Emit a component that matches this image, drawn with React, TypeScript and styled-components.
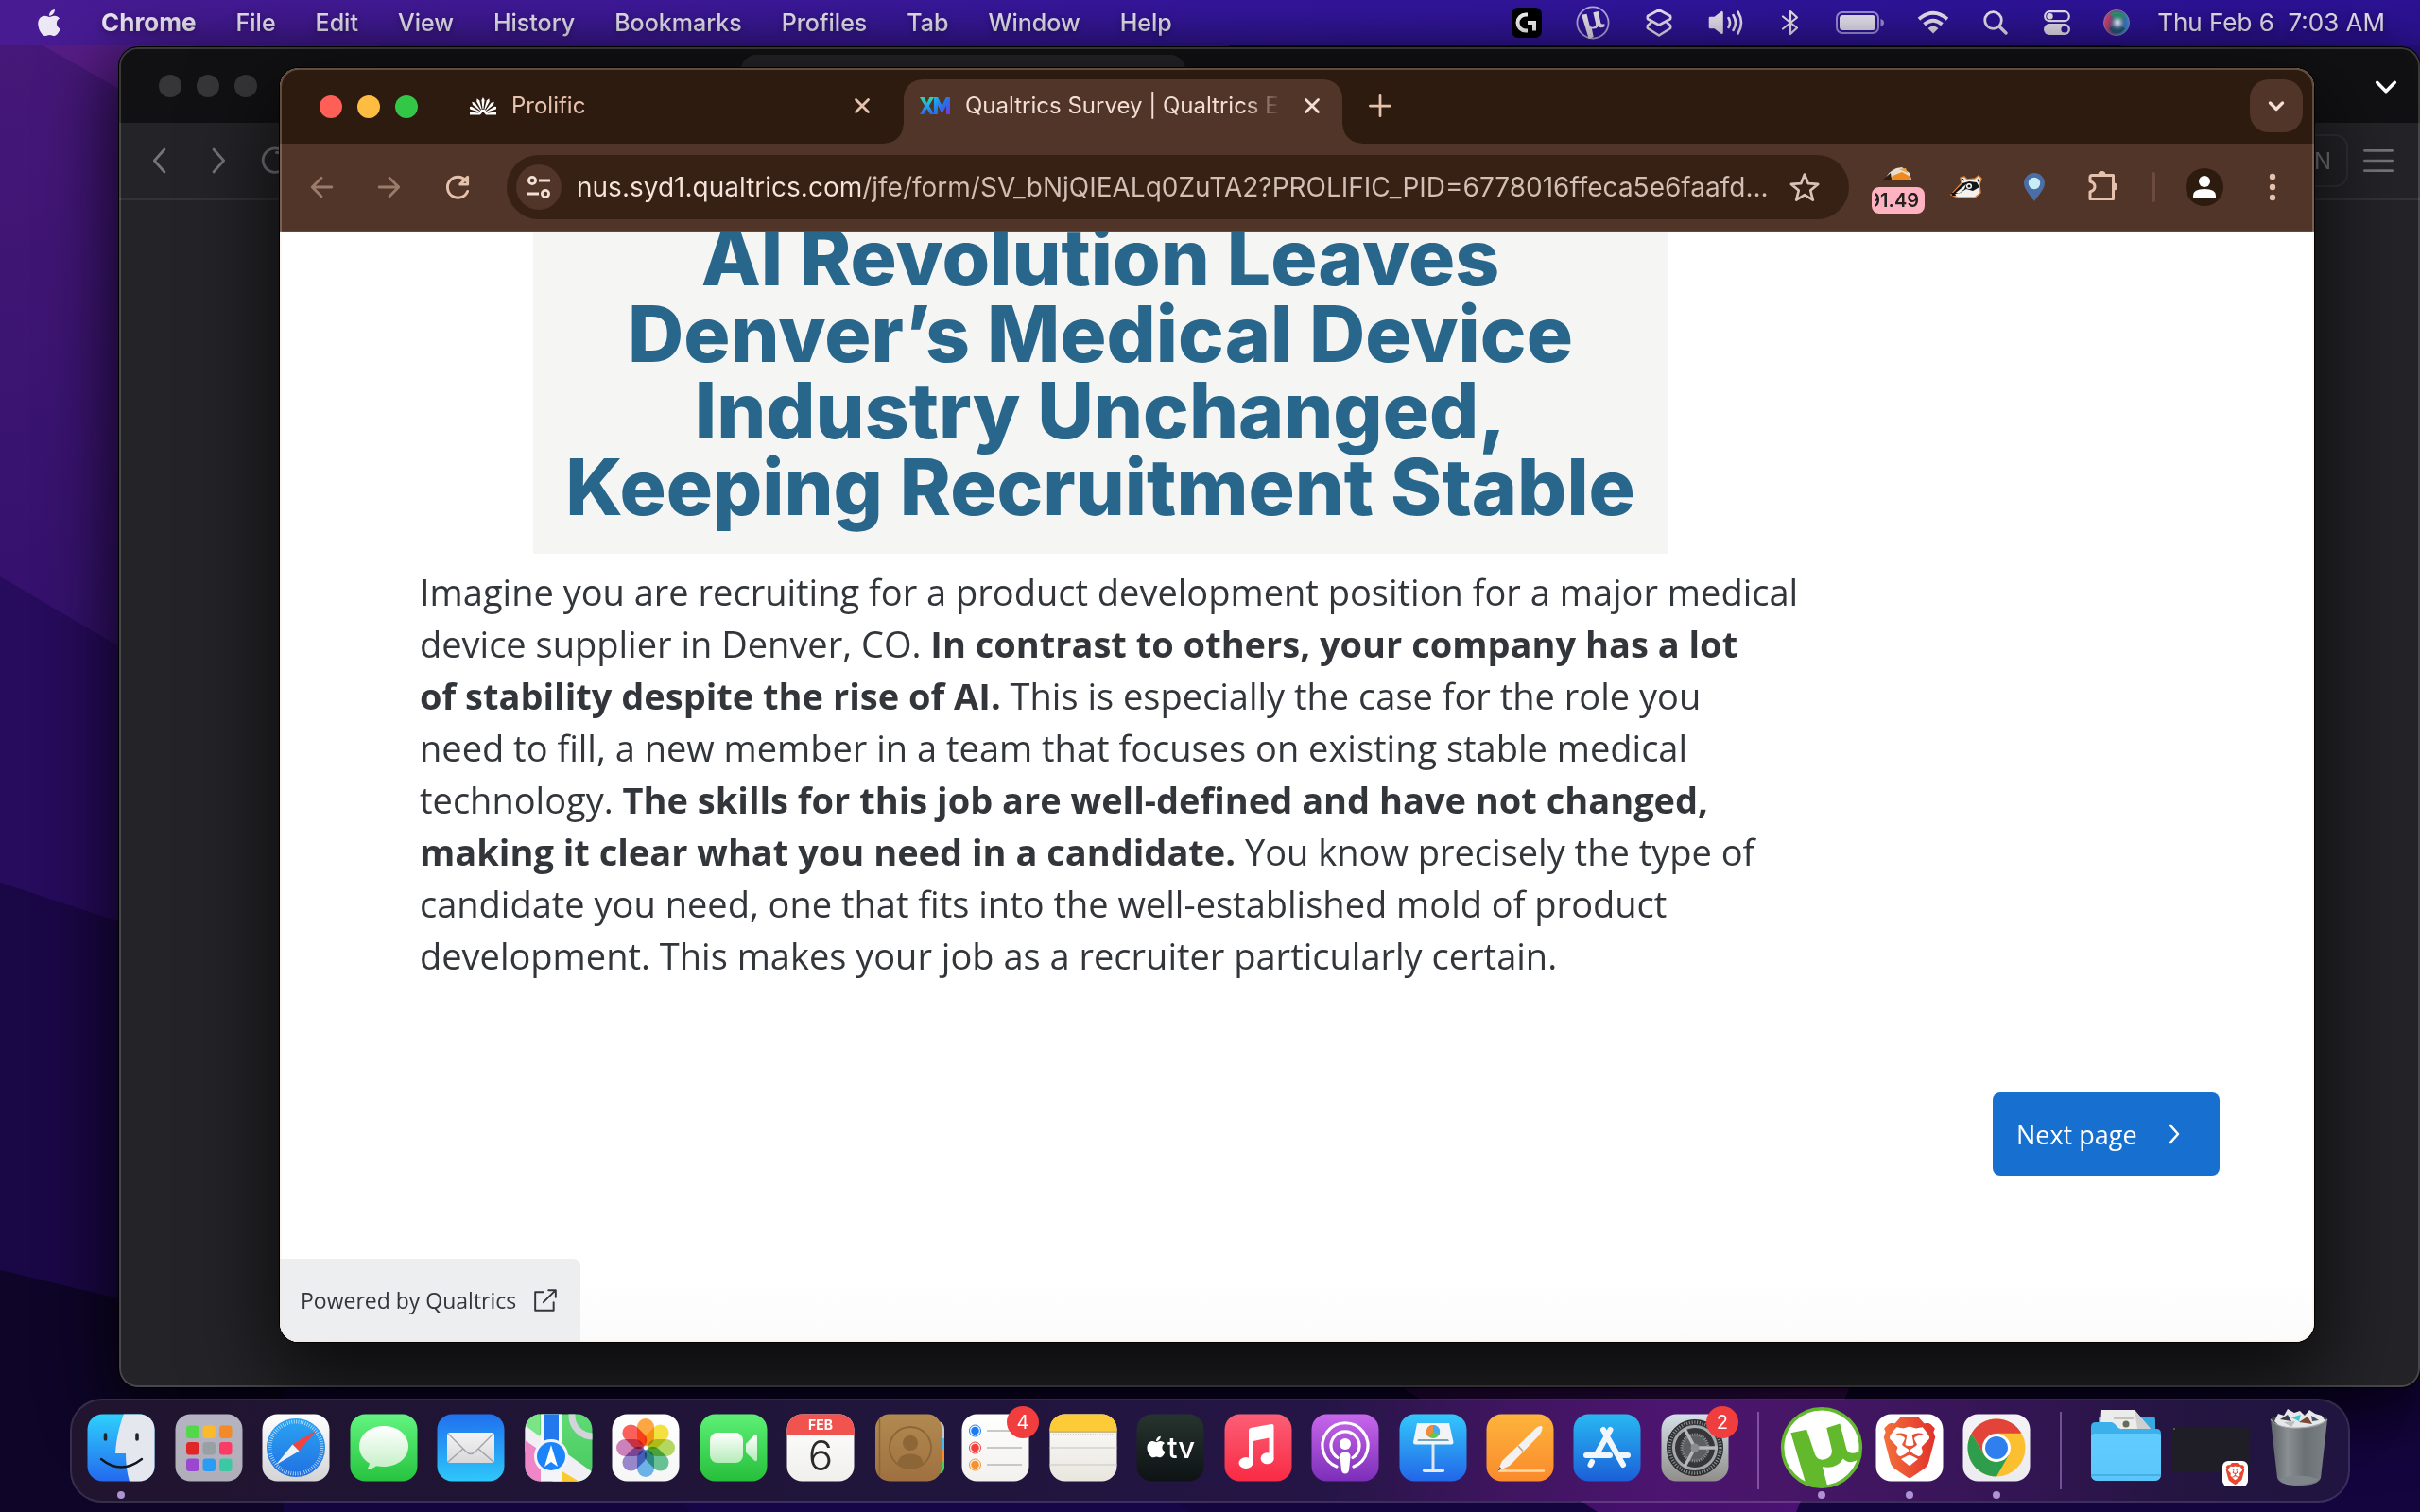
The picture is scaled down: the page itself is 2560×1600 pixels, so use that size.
import React from 'react';
import styled, { createGlobalStyle, css } from 'styled-components';
import { FaApple } from 'react-icons/fa';
import { SiBrave } from 'react-icons/si';

const UI = `Inter, "Liberation Sans", sans-serif`;
const READ = `"Open Sans", "Liberation Sans", sans-serif`;

const GlobalStyle = createGlobalStyle`
  * { box-sizing: border-box; }
  html, body, #root { height: 100%; }
  body { margin: 0; overflow: hidden; background: #0d0526; font-family: ${UI}; }
  button { margin: 0; padding: 0; border: 0; background: none; color: inherit; font: inherit; }
  svg { display: block; flex: none; }
`;

const Desktop = styled.div`
  position: relative;
  height: 100vh;
  min-height: 900px;
  overflow: hidden;
`;

const Wallpaper = styled.svg`
  position: absolute;
  inset: 0;
  width: 100%;
  height: 100%;
`;

/* ---------- menu bar ---------- */

const MenuBar = styled.header`
  position: relative;
  display: flex;
  align-items: center;
  justify-content: space-between;
  height: 48px;
  padding: 0 37px 0 39px;
  color: #ece8f6;
  background: linear-gradient(90deg, #481b92 0%, #3f1a9a 25%, #35179e 50%, #2f159c 75%, #2d1296 100%);
  font-size: 25px;
  line-height: 32px;
  text-shadow: 0 2px 6px rgba(0, 0, 0, 0.35);
`;

const MenuList = styled.nav`
  display: flex;
  align-items: center;
  gap: 42px;
`;

const MenuItem = styled.button<{ $bold?: boolean }>`
  font-size: ${(p) => (p.$bold ? 26 : 25)}px;
  font-weight: ${(p) => (p.$bold ? 700 : 500)};
  text-shadow: inherit;
  svg {
    width: 26px;
    height: 32px;
  }
`;

const StatusList = styled.div`
  display: flex;
  align-items: center;
`;

const StatusIcon = styled.button<{ $w: number }>`
  display: flex;
  justify-content: center;
  width: ${(p) => p.$w}px;
`;

const Clock = styled.time`
  margin-left: 12px;
  font-size: 26px;
  white-space: pre;
`;

/* ---------- windows ---------- */

const WindowFrame = styled.section<{ $ring: string }>`
  position: absolute;
  display: flex;
  flex-direction: column;
  overflow: hidden;
  border-radius: 20px;
  &::after {
    content: '';
    position: absolute;
    inset: 0;
    border-radius: inherit;
    box-shadow: inset 0 0 0 2px ${(p) => p.$ring};
    pointer-events: none;
  }
`;

const BackWindow = styled(WindowFrame)`
  inset: 50px 0 132px 126px;
  background: #242428;
  box-shadow: 0 0 0 1px #000, 0 20px 70px 10px rgba(0, 0, 0, 0.75);
`;

const BackTitle = styled.div`
  display: flex;
  align-items: flex-start;
  justify-content: space-between;
  height: 80px;
  padding: 0 22px 0 42px;
  background: #111113;
  color: #fff;
`;

const BackTab = styled.div`
  position: absolute;
  top: 8px;
  left: 658px;
  width: 470px;
  height: 60px;
  border-radius: 16px;
  background: #232327;
`;

const BackTabSearch = styled.button`
  padding-top: 28px;
`;

const BackToolbar = styled.div`
  display: flex;
  align-items: center;
  justify-content: space-between;
  height: 82px;
  padding: 0 28px 0 28px;
  border-bottom: 2px solid #323238;
  color: #75757a;
`;

const Row = styled.div<{ $gap: number }>`
  display: flex;
  align-items: center;
  gap: ${(p) => p.$gap}px;
`;

const VpnButton = styled.button`
  width: 120px;
  height: 56px;
  padding-right: 16px;
  border: 2px solid #313136;
  border-radius: 14px;
  text-align: right;
  font-size: 24px;
`;

const Light = styled.button<{ $color: string }>`
  width: 24px;
  height: 24px;
  border-radius: 50%;
  background: ${(p) => p.$color};
`;

const Lights = styled.div<{ $top: number }>`
  display: flex;
  gap: 16px;
  padding-top: ${(p) => p.$top}px;
`;

const ChromeWindow = styled(WindowFrame)`
  inset: 72px 112px 180px 296px;
  background: #fff;
  box-shadow: 0 0 0 1px #000, 0 36px 90px 8px rgba(0, 0, 0, 0.7);
`;

const TabStrip = styled.div`
  display: flex;
  align-items: flex-end;
  height: 80px;
  padding: 0 12px 0 42px;
  background: #2e1b0f;
  color: #e6c2ae;
`;

const StripLights = styled(Lights)`
  align-self: flex-start;
  margin-right: 38px;
`;

const Tab = styled.div<{ $active?: boolean }>`
  position: relative;
  display: flex;
  align-items: center;
  width: 464px;
  height: 68px;
  margin-right: 12px;
  padding: 0 20px 12px 17px;
  border-radius: 20px 20px 0 0;
  ${(p) =>
    p.$active &&
    css`
      background: #503528;
      color: #f3dfd6;
      &::before,
      &::after {
        content: '';
        position: absolute;
        bottom: 0;
        width: 20px;
        height: 20px;
      }
      &::before {
        left: -20px;
        background: radial-gradient(circle at 0 0, transparent 19px, #503528 20px);
      }
      &::after {
        right: -20px;
        background: radial-gradient(circle at 100% 0, transparent 19px, #503528 20px);
      }
    `}
`;

const TabTitle = styled.span`
  flex: 1;
  min-width: 0;
  margin: 0 20px 0 16px;
  overflow: hidden;
  white-space: nowrap;
  font-size: 24px;
  line-height: 32px;
  mask-image: linear-gradient(90deg, #000 calc(100% - 40px), transparent);
`;

const NewTab = styled.button`
  width: 56px;
  height: 56px;
  padding: 13px;
  margin-bottom: 12px;
`;

const TabSearch = styled.button`
  display: grid;
  place-items: center;
  width: 56px;
  height: 56px;
  margin: 0 0 12px auto;
  border-radius: 20px;
  background: #503528;
  color: #f3dfd6;
`;

const Toolbar = styled.div`
  display: flex;
  align-items: center;
  gap: 16px;
  height: 94px;
  padding: 0 16px;
  border-bottom: 2px solid #5f4a40;
  background: #503528;
  color: #e6c2ae;
`;

const ToolButton = styled.button<{ $dim?: boolean }>`
  position: relative;
  display: grid;
  place-items: center;
  flex: none;
  width: 56px;
  height: 56px;
  opacity: ${(p) => (p.$dim ? 0.5 : 1)};
`;

const Omnibox = styled.label`
  display: flex;
  align-items: center;
  flex: 1;
  height: 68px;
  margin: 0 8px;
  padding: 0 30px 0 10px;
  border-radius: 34px;
  background: #372115;
  color: #d8c3ba;
`;

const SiteInfo = styled.button`
  display: grid;
  place-items: center;
  flex: none;
  width: 48px;
  height: 48px;
  border-radius: 50%;
  background: #503528;
  color: #f3dfd6;
`;

const Address = styled.input`
  flex: 1;
  min-width: 0;
  height: 48px;
  margin: 0 20px 0 16px;
  padding: 0;
  border: 0;
  outline: 0;
  font-family: ${UI};
  font-size: 28px;
  color: transparent;
  background: linear-gradient(90deg, #f6e4dc 303px, #d3bfb6 303px);
  background-clip: text;
  -webkit-background-clip: text;
`;

const PriceBadge = styled.span`
  position: absolute;
  left: 0;
  bottom: 0;
  display: flex;
  justify-content: flex-end;
  width: 56px;
  height: 28px;
  padding: 0 6px 0 4px;
  border-radius: 8px;
  background: #ffb3c0;
  color: #24201f;
  font-size: 20px;
  font-weight: 600;
  line-height: 28px;
`;

const Clip = styled.span`
  display: flex;
  justify-content: flex-end;
  width: 46px;
  overflow: hidden;
`;

const Divider = styled.span`
  width: 4px;
  height: 32px;
  margin: 0 8px;
  border-radius: 2px;
  background: #6c4b3e;
`;

const Avatar = styled.span`
  display: grid;
  place-items: center;
  width: 40px;
  height: 40px;
  border-radius: 50%;
  background: #2e1b0f;
`;

/* ---------- survey ---------- */

const Survey = styled.main`
  display: flex;
  flex-direction: column;
  flex: 1;
  min-height: 0;
  overflow: hidden;
  color: #32363b;
  background: linear-gradient(180deg, #fff 94%, #fbfbfc);
`;

const Question = styled.article`
  width: 1440px;
  max-width: 90%;
  margin-left: 148px;
`;

const Banner = styled.h1`
  max-width: 1200px;
  margin: -14px auto 0;
  padding-bottom: 30px;
  background: #f5f5f3;
  color: #28668b;
  font-family: ${UI};
  font-size: 82px;
  font-weight: 800;
  line-height: 81px;
  text-align: center;
  white-space: nowrap;
`;

const Passage = styled.p`
  margin: 13px 0 0;
  font-family: ${READ};
  font-size: 38px;
  line-height: 55px;
  white-space: nowrap;
`;

const NextButton = styled.button`
  display: flex;
  align-items: center;
  justify-content: space-between;
  align-self: flex-end;
  width: 240px;
  height: 88px;
  margin: 117px 100px 0 0;
  padding: 0 36px 0 25px;
  border-radius: 8px;
  background: #1770cf;
  color: #fff;
  font-family: ${READ};
  font-size: 27px;
`;

const Powered = styled.a`
  display: flex;
  align-items: center;
  gap: 18px;
  align-self: flex-start;
  height: 88px;
  margin-top: auto;
  padding: 0 24px 0 22px;
  border-radius: 0 8px 0 0;
  background: #eceef0;
  color: #32363b;
  font-family: ${READ};
  font-size: 23px;
  text-decoration: none;
`;

/* ---------- dock ---------- */

const Dock = styled.footer`
  position: absolute;
  left: 74px;
  right: 74px;
  bottom: 10px;
  display: flex;
  height: 110px;
  padding: 14px 6px 0;
  border: 2px solid rgba(255, 255, 255, 0.17);
  border-radius: 34px;
  background: linear-gradient(90deg, #20142f 0%, #20153c 38%, #251546 55%, #3f1560 63%, #4c1570 70%, #461666 76%, #321552 86%, #231540 93%, #201440 100%);
  background-clip: padding-box;
`;

const DockItem = styled.button`
  position: relative;
  display: flex;
  flex-direction: column;
  align-items: center;
  flex: 1;
  height: 94px;
`;

const IconBox = styled.span`
  position: relative;
  display: grid;
  place-items: center;
  width: 72px;
  height: 72px;
`;

const Running = styled.span`
  width: 8px;
  height: 8px;
  margin-top: 10px;
  border-radius: 50%;
  background: #ad92d4;
`;

const Count = styled.span`
  position: absolute;
  top: -8px;
  right: -10px;
  width: 34px;
  height: 34px;
  border-radius: 50%;
  background: #f03d3d;
  color: #fff;
  font-size: 20px;
  line-height: 34px;
`;

const DockSplit = styled.span`
  width: 2px;
  height: 82px;
  margin: -2px 20px 0;
  background: rgba(214, 170, 255, 0.4);
`;

/* ---------- small glyphs ---------- */

const Stroke = ({ d, size, w = 2, vb = 24 }: { d: string; size: number; w?: number; vb?: number }) => (
  <svg width={size} height={size} viewBox={`0 0 ${vb} ${vb}`} fill="none" stroke="currentColor" strokeWidth={w} strokeLinecap="round" strokeLinejoin="round">
    <path d={d} />
  </svg>
);

const Close = () => (
  <button aria-label="Close tab">
    <Stroke d="M5.500 5.500L18.500 18.500M18.500 5.500L5.500 18.500" size={24} w={2.8} />
  </button>
);

const ProlificMark = () => (
  <svg width="28" height="20" viewBox="0 0 28 20" fill="#fff">
    {[-66, -44, -22, 0, 22, 44, 66].map((a) => (
      <path key={a} transform={`rotate(${a} 14 18)`} d="M13.600 13.500L12.400 4L14 1L15.600 4L14.400 13.500Z" />
    ))}
    <path d="M0 16.500L9 17.500L12 14H16L19 17.500L28 16.500V19.500H17L14 16L11 19.500H0z" />
  </svg>
);

const XmMark = () => (
  <svg width="32" height="20" viewBox="0 0 32 20">
    <defs>
      <linearGradient id="xm1" x1="0" y1="0" x2="0" y2="1">
        <stop offset="0" stopColor="#2fdca0" /><stop offset=".5" stopColor="#1fa8f0" /><stop offset="1" stopColor="#2b62e8" />
      </linearGradient>
      <linearGradient id="xm2" x1="0" y1="0" x2="1" y2="1">
        <stop offset="0" stopColor="#27b6e8" /><stop offset=".5" stopColor="#2371ee" /><stop offset="1" stopColor="#7a35e0" />
      </linearGradient>
    </defs>
    <path d="M0 1h4.500L7.500 7 10.500 1H15L9.800 10 15.400 19H10.800L7.500 13 4.400 19H0L5.200 10z" fill="url(#xm1)" />
    <path d="M15 1h4.200L23.500 10 27.800 1H32V19h-4V9.500L24.800 16h-2.600L19 9.500V19h-4z" fill="url(#xm2)" />
  </svg>
);

const MuPath = 'M17 27L32 24L40 56Q44 66 54 62Q60 59 58 50L51 20L66 17L73 50Q75 57 84 53L85 61Q74 68 66 61Q60 70 47 68L52 92L38 98Z';

const statusIcons: { name: string; w: number; icon: React.ReactNode }[] = [
  {
    name: 'Logitech G HUB', w: 66,
    icon: (
      <svg width="32" height="32" viewBox="0 0 32 32">
        <rect width="32" height="32" rx="7" fill="#000" />
        <path d="M17 7.500H15A8.500 8.500 0 0 0 15 24.500H17" fill="none" stroke="#fff" strokeWidth="4" />
        <path d="M17 14H26V24.500h-4V18H17z" fill="#fff" />
      </svg>
    ),
  },
  {
    name: 'uTorrent', w: 74,
    icon: (
      <svg width="36" height="36" viewBox="0 0 100 100">
        <circle cx="50" cy="50" r="46" fill="none" stroke="#b9b0e4" strokeWidth="5" />
        <path d={MuPath} fill="#ece8f6" />
      </svg>
    ),
  },
  {
    name: 'Shortcuts', w: 66,
    icon: (
      <svg width="30" height="32" viewBox="0 0 30 32" fill="none" stroke="#ece8f6" strokeWidth="2.600" strokeLinejoin="round">
        <path d="M15 2.500L27 9Q27.600 10.500 27 12L15 18.500L3 12Q2.400 10.500 3 9Z" />
        <path d="M7 15.500L3 19Q2.400 20.500 3 22L15 29.500L27 22Q27.600 20.500 27 19L23 15.500" />
      </svg>
    ),
  },
  {
    name: 'Volume', w: 76,
    icon: (
      <svg width="38" height="28" viewBox="0 0 38 28" fill="none" stroke="#ece8f6" strokeWidth="2.600" strokeLinecap="round">
        <path d="M2 9h5L14.500 3.200V24.800L7 19H2z" fill="#ece8f6" strokeLinejoin="round" />
        <path d="M21.500 9Q24.500 14 21.500 19M26.500 6Q31.500 14 26.500 22M31.500 2.500Q38.500 14 31.500 25.500" />
      </svg>
    ),
  },
  { name: 'Bluetooth', w: 60, icon: <svg width="20" height="28" viewBox="0 0 20 28" fill="none" stroke="#ece8f6" strokeWidth="2.200" strokeLinejoin="round" strokeLinecap="round"><path d="M2 7.500L17 19.500L10 26V2L17 8.500L2 20.500" /></svg> },
  {
    name: 'Battery', w: 88,
    icon: (
      <svg width="52" height="24" viewBox="0 0 52 24">
        <rect x="1" y="1" width="44" height="22" rx="6" fill="none" stroke="#9d92dc" strokeWidth="2" />
        <rect x="4" y="4" width="38" height="16" rx="3.500" fill="#ece8f6" />
        <path d="M47.500 8Q51 9 51 12T47.500 16z" fill="#9d92dc" />
      </svg>
    ),
  },
  {
    name: 'Wi-Fi', w: 66,
    icon: (
      <svg width="34" height="26" viewBox="0 0 34 26" fill="none" stroke="#ece8f6" strokeWidth="3.800">
        <path d="M2 9.200Q17-3.800 32 9.200M7.500 14.800Q17 6.500 26.500 14.800" />
        <path d="M11.500 19Q17 14.500 22.500 19L17 24.500z" fill="#ece8f6" stroke="none" />
      </svg>
    ),
  },
  { name: 'Search', w: 66, icon: <svg width="26" height="26" viewBox="0 0 26 26" fill="none" stroke="#ece8f6" strokeWidth="2.800" strokeLinecap="round"><circle cx="10.500" cy="10.500" r="8.800" /><path d="M17 17L24 24" strokeWidth="3.400" /></svg> },
  {
    name: 'Control Center', w: 64,
    icon: (
      <svg width="28" height="26" viewBox="0 0 28 26">
        <rect x="1.200" y="1.200" width="25.600" height="10" rx="5" fill="none" stroke="#ece8f6" strokeWidth="2.200" />
        <circle cx="6.500" cy="6.200" r="3.200" fill="#ece8f6" />
        <rect y="14" width="28" height="12" rx="6" fill="#ece8f6" />
        <circle cx="22" cy="20" r="3.600" fill="#2f159c" />
      </svg>
    ),
  },
  {
    name: 'Siri', w: 62,
    icon: (
      <svg width="28" height="28" viewBox="0 0 28 28">
        <defs>
          <radialGradient id="siri" cx=".55" cy=".5" r=".45"><stop offset="0" stopColor="#fff" /><stop offset=".3" stopColor="#c8e4f6" stopOpacity=".8" /><stop offset="1" stopColor="#2a3a70" stopOpacity="0" /></radialGradient>
          <linearGradient id="siri2" x1="0" y1=".4" x2="1" y2=".6"><stop offset="0" stopColor="#f04470" /><stop offset=".45" stopColor="#6a4a8a" /><stop offset="1" stopColor="#2a96e8" /></linearGradient>
        </defs>
        <circle cx="14" cy="14" r="13.500" fill="url(#siri2)" stroke="#8a86b0" />
        <path d="M7 5Q14-1 23 6Q24 12 14 13Z" fill="#2c9a70" />
        <path d="M6 20Q14 14 23 20Q18 28 9 24Z" fill="#235a78" />
        <circle cx="14" cy="14" r="11" fill="url(#siri)" />
      </svg>
    ),
  },
];

/* ---------- dock artwork ---------- */

const Grad = ({ id, from, to }: { id: string; from: string; to: string }) => (
  <defs>
    <linearGradient id={id} x1="0" y1="0" x2="0" y2="1"><stop offset="0" stopColor={from} /><stop offset="1" stopColor={to} /></linearGradient>
  </defs>
);

const Tile = ({ id, from, to, children }: { id: string; from: string; to: string; children?: React.ReactNode }) => (
  <svg width="72" height="72" viewBox="0 0 72 72">
    <Grad id={id} from={from} to={to} />
    <clipPath id={`${id}-clip`}><rect x=".5" y=".5" width="71" height="71" rx="16" /></clipPath>
    <rect x=".5" y=".5" width="71" height="71" rx="16" fill={`url(#${id})`} />
    <g clipPath={`url(#${id}-clip)`}>{children}</g>
  </svg>
);

const Finder = () => (
  <Tile id="finder" from="#2fd0fd" to="#2369ee">
    <path d="M39 0Q31 22 30 42H41Q41 58 45 72H72V0z" fill="#e4e7ed" />
    <path d="M19.500 22v5M53 22v5" stroke="#20242c" strokeWidth="3.600" strokeLinecap="round" />
    <path d="M15 48Q36 65 58 48" fill="none" stroke="#111620" strokeWidth="2.400" strokeLinecap="round" />
  </Tile>
);

const padColors = ['#52d848', '#fbb92c', '#f28a2a', '#e02626', '#98a0a4', '#fb3c64', '#9a48d0', '#2a9cf4', '#3cc8a4'];
const Launchpad = () => (
  <Tile id="pad" from="#b5b4c2" to="#b0aeb8">
    {padColors.map((c, i) => (
      <rect key={c} x={12 + (i % 3) * 17.5} y={12.5 + Math.floor(i / 3) * 17.5} width="13.500" height="13.500" rx="3.200" fill={c} />
    ))}
  </Tile>
);

const Safari = () => (
  <Tile id="safari" from="#ffffff" to="#d4d4d4">
    <Grad id="safari-dial" from="#2aa4f2" to="#2170e2" />
    <circle cx="36" cy="36" r="31" fill="url(#safari-dial)" />
    <circle cx="36" cy="36" r="27.500" fill="none" stroke="#d4e9fb" strokeWidth="4" strokeDasharray="0.700 1.700" />
    <path d="M57 18L39.500 39.500L32.500 32.500z" fill="#f2433c" />
    <path d="M15 54L32.500 32.500L39.500 39.500z" fill="#f2f2f4" />
  </Tile>
);

const Messages = () => (
  <Tile id="msg" from="#62f480" to="#27c33f">
    <Grad id="msg-b" from="#ffffff" to="#c4efc6" />
    <path d="M36 13C21 13 10 22.500 10 34.500C10 42 14 48.500 21 52.500Q20.500 56 18 59Q24 58.500 28 55.200Q32 56 36 56C51 56 62 46.500 62 34.500S51 13 36 13z" fill="url(#msg-b)" />
  </Tile>
);

const Mail = () => (
  <Tile id="mail" from="#2070ee" to="#2ec8fb">
    <Grad id="mail-e" from="#f4f4f4" to="#d8d8da" />
    <rect x="11" y="20" width="50" height="32" rx="3" fill="url(#mail-e)" />
    <path d="M12 21L31 40Q36 45 41 40L60 21M12 51L28 37M60 51L44 37" fill="none" stroke="#a2a2a8" strokeWidth="1.400" />
  </Tile>
);

const Maps = () => (
  <Tile id="maps" from="#5fdb74" to="#48c860">
    <path d="M0 10L72 62V80L30 72 0 40z" fill="#f0f0f4" />
    <path d="M0 28L18 40V72H0z" fill="#ee86c8" />
    <path d="M0 12L16 24V0H0z" fill="#7be484" />
    <path d="M38 60L58 72H38z" fill="#fac92e" />
    <path d="M17 0H40V72H17z" fill="#f3f5f8" />
    <path d="M20 0H36V40H20z" fill="#2478ee" />
    <circle cx="72" cy="2" r="22" fill="none" stroke="#d2d4dc" strokeWidth="7" />
    <circle cx="28" cy="45" r="18" fill="#f1f3f8" />
    <circle cx="28" cy="45" r="15" fill="#1c84fa" />
    <path d="M28 33L35 56L28 51L21 56z" fill="#fff" />
  </Tile>
);

const petals = ['#fd9b2a', '#f2dc24', '#a8d24a', '#52b884', '#58a8e4', '#8a78c4', '#c470b0', '#fa4a44'];
const Photos = () => (
  <Tile id="photos" from="#ffffff" to="#f6f6f6">
    <g style={{ mixBlendMode: 'multiply' }}>
      {petals.map((c, i) => (
        <rect key={c} x="27" y="5" width="18" height="29" rx="9" fill={c} fillOpacity=".88" transform={`rotate(${i * 45} 36 36)`} style={{ mixBlendMode: 'multiply' }} />
      ))}
    </g>
  </Tile>
);

const FaceTime = () => (
  <Tile id="ft" from="#5df076" to="#26bf3b">
    <Grad id="ft-c" from="#ffffff" to="#b4ecb8" />
    <rect x="11" y="20" width="35" height="32" rx="8" fill="url(#ft-c)" />
    <path d="M49 32L58 22.500Q61 20.500 61 24V48Q61 51.500 58 49.500L49 41z" fill="url(#ft-c)" />
  </Tile>
);

const Calendar = () => (
  <Tile id="cal" from="#ffffff" to="#f0efec">
    <path d="M0 0H72V22H0z" fill="#f1544f" />
    <text x="36" y="17" textAnchor="middle" fontSize="14" fontWeight="700" fontFamily="Inter" fill="#fff">FEB</text>
    <text x="36" y="60" textAnchor="middle" fontSize="44" fontWeight="300" fontFamily="Inter" fill="#2a2a2c">6</text>
  </Tile>
);

const Contacts = () => (
  <svg width="76" height="72" viewBox="0 0 76 72">
    <Grad id="con" from="#b18a50" to="#a07040" />
    <path d="M68 8q6 2 6 8v10h-6z" fill="#c8c8c8" /><path d="M68 26h6v12h-6z" fill="#48b8f4" /><path d="M68 38h6v13h-6z" fill="#f88c28" /><path d="M68 51h6v6q0 5-6 7z" fill="#48cc5c" />
    <rect x="1" y=".5" width="70" height="71" rx="15" fill="url(#con)" />
    <path d="M5.500 6V66" stroke="#8a6538" strokeWidth="1.500" />
    <circle cx="38" cy="36" r="22" fill="none" stroke="#8c6636" strokeWidth="1.800" />
    <circle cx="38" cy="31" r="8" fill="#8c6636" />
    <path d="M24 53Q26 42.500 38 42.500T52 53Q46 58 38 58T24 53z" fill="#8c6636" />
  </svg>
);

const Reminders = () => (
  <Tile id="rem" from="#ffffff" to="#f2f1ef">
    {['#1a7cf4', '#f2403e', '#f6922c'].map((c, i) => (
      <g key={c}>
        <circle cx="14.500" cy={18 + i * 18} r="4.300" fill={c} />
        <circle cx="14.500" cy={18 + i * 18} r="6" fill="none" stroke={c} strokeWidth="1" />
        <path d={`M27 ${18 + i * 18}H64`} stroke="#b8b8ba" strokeWidth="1.400" />
      </g>
    ))}
  </Tile>
);

const Notes = () => (
  <Tile id="notes" from="#fdfdfd" to="#e9e6de">
    <path d="M0 0H72V18H0z" fill="#fdca38" />
    <path d="M0 19H72" stroke="#b8a468" strokeWidth="1.600" />
    <path d="M4 22H72" stroke="#b8b8b4" strokeWidth="1.500" strokeDasharray="1 1.600" />
    <path d="M0 36H72M0 54H72" stroke="#d4d2ce" strokeWidth="1.500" />
  </Tile>
);

const AppleTv = () => (
  <Tile id="tv" from="#26342f" to="#0e1214">
    <FaApple x="8" y="22" size={26} color="#fff" />
    <text x="33" y="46.500" fontSize="31" fontWeight="500" fontFamily="Inter" fill="#fff">tv</text>
  </Tile>
);

const Music = () => (
  <Tile id="music" from="#fb5f76" to="#f92a44">
    <path d="M26 17.500Q26 15.500 28 15L50 11Q52.500 10.500 52.500 13V46A7 6 0 1 1 47.500 41.500V25.500L30.500 29V51.500A7.500 6 0 1 1 26 46.500z" fill="#fff" />
  </Tile>
);

const Podcasts = () => (
  <Tile id="pod" from="#c767ec" to="#7c2eb8">
    <g fill="none" stroke="#fff" strokeWidth="3.200" strokeLinecap="round">
      <path d="M27 56A24 24 0 1 1 45 56" /><path d="M28 46.500A15 15 0 1 1 44 46.500" />
    </g>
    <circle cx="36" cy="32" r="6" fill="#fff" />
    <path d="M30.500 45Q30.500 40.500 36 40.500T41.500 45L40 60Q39 63.500 36 63.500T32 60z" fill="#fff" />
  </Tile>
);

const Keynote = () => (
  <Tile id="key" from="#33c8fb" to="#2266e8">
    <path d="M34.500 32H37.500V59H34.500z" fill="#dfe6ec" /><rect x="25" y="58.500" width="23" height="3.500" rx="1.700" fill="#e6e8ec" />
    <path d="M19 10H53L57.500 30Q57.500 32.500 55 32.500H17.500Q15 32.500 15 30z" fill="#f2f4f6" />
    <path d="M20 27H52L53 29H19.500z" fill="#78a4be" />
    <circle cx="36" cy="19" r="7" fill="#5ec850" /><path d="M36 19V12A7 7 0 0 1 42.500 22z" fill="#4aa8f0" /><path d="M36 19L31.500 24.500A7 7 0 0 1 36 12z" fill="#f28a3c" />
  </Tile>
);

const Pages = () => (
  <Tile id="pages" from="#fdb43c" to="#fa8a2c">
    <path d="M14 60.500H61" stroke="#ffd9a4" strokeWidth="2.400" strokeLinecap="round" />
    <path d="M12 61L17 50L53 15Q58 11.500 59.500 14Q60 17 57 22L25 55z" fill="#f4f2f0" />
    <path d="M34 34L39 39.500" stroke="#b8a08c" strokeWidth="1.600" />
    <path d="M12 61L14.500 56L16.500 58.500z" fill="#7a5a3c" />
  </Tile>
);

const AppStore = () => (
  <Tile id="store" from="#28b8f2" to="#1b5fd8">
    <g stroke="#f1f6fc" strokeWidth="6" strokeLinecap="round">
      <path d="M39.500 17L25 43" /><path d="M32 17L53 54" /><path d="M14 44H39M50 44H58" /><path d="M20 51L18.500 54" />
    </g>
  </Tile>
);

const Settings = () => (
  <Tile id="set" from="#d4e0e8" to="#908e8a">
    <circle cx="36" cy="36" r="27.500" fill="#3a3c3e" stroke="#2a2c2e" strokeWidth="5" />
    <circle cx="36" cy="36" r="27" fill="none" stroke="#8c8e90" strokeWidth="3.500" strokeDasharray="1.200 1.600" />
    <circle cx="36" cy="36" r="22.500" fill="#34363a" stroke="#a4a8aa" strokeWidth="3" />
    <circle cx="36" cy="36" r="14" fill="#5c5e60" stroke="#8c8e90" strokeWidth="3" strokeDasharray="1.200 1.200" />
    <path d="M36 36L25 16M36 36H60M36 36L25 56" stroke="#b4b8ba" strokeWidth="3.500" />
    <circle cx="36" cy="36" r="4.500" fill="#8a8c8e" />
  </Tile>
);

const MicroTorrent = () => (
  <svg width="88" height="88" viewBox="0 0 100 100" style={{ margin: '-8px' }}>
    <clipPath id="ut-clip"><circle cx="50" cy="50" r="47" /></clipPath>
    <circle cx="50" cy="50" r="47" fill="#fff" />
    <g clipPath="url(#ut-clip)"><path d="M13 32L32 28L42 58Q45 66 54 64Q64 61 62 51L56 26L72 21L80 52Q83 59 94 55L97 62Q84 72 76 63Q68 76 51 73L58 100H33z" fill="#62b92c" /></g>
    <circle cx="50" cy="50" r="47" fill="none" stroke="#62b92c" strokeWidth="4" />
  </svg>
);

const Brave = () => (
  <Tile id="brave" from="#ffffff" to="#ffffff">
    <linearGradient id="brave-l" x1="0" x2="1"><stop offset="0" stopColor="#f4703a" /><stop offset="1" stopColor="#e0322c" /></linearGradient>
    <SiBrave x="4" y="4" size={64} style={{ fill: 'url(#brave-l)' }} />
  </Tile>
);

const Chrome = () => (
  <Tile id="chrome" from="#f4f4f8" to="#ececf0">
    <circle cx="36" cy="36" r="30.500" fill="#fcbf30" />
    <path d="M36 5.500A30.500 30.500 0 0 1 62.400 20.700H36L22.800 43.600L9.600 20.700A30.500 30.500 0 0 1 36 5.500z" fill="#e2443a" />
    <path d="M9.600 20.700L22.800 43.600Q28 51 36 51.300L49.200 43.600L36 66.500A30.500 30.500 0 0 1 9.600 20.700z" fill="#2f9e4c" />
    <circle cx="36" cy="36" r="15" fill="#fff" /><circle cx="36" cy="36" r="12" fill="#2f80ee" />
  </Tile>
);

const Folder = () => (
  <svg width="76" height="76" viewBox="0 0 76 76" style={{ marginTop: -4 }}>
    <Grad id="fold" from="#62ccff" to="#5ac6fa" />
    <path d="M9 9Q9 7 12 7H66Q69 7 69 11V30H9z" fill="#35a9e0" />
    <path d="M12 0H47L64 20V30H10z" fill="#ececea" /><path d="M47 0L64 20H50z" fill="#cfcfcf" />
    <circle cx="38" cy="15" r="3.500" fill="#6a6a58" /><path d="M25 9H46" stroke="#999" />
    <path d="M1 18Q1 13 6 13H22Q25 13 28 17T34 20H70Q75 20 75 25V68Q75 75 68 75H8Q1 75 1 68z" fill="#3bb0ea" />
    <path d="M1 28Q1 25 5 25H71Q75 25 75 28V68Q75 75 68 75H8Q1 75 1 68z" fill="url(#fold)" />
    <path d="M1 69H75" stroke="#3fa8dc" strokeWidth="1.500" />
  </svg>
);

const Minimised = () => (
  <svg width="84" height="78" viewBox="0 0 84 78" style={{ margin: '0 -6px' }}>
    <rect x="0" y="14" width="82" height="48" fill="#1f1d26" />
    <path d="M2 16h2" stroke="#888" />
    <rect x="54" y="50" width="27" height="27" rx="6" fill="#fff" />
    <SiBrave x="56" y="52" size={23} color="#e8462e" />
  </svg>
);

const Trash = () => (
  <svg width="64" height="84" viewBox="0 0 64 84" style={{ margin: '-6px 0' }}>
    <linearGradient id="bin" x1="0" x2="1"><stop offset="0" stopColor="#5c6266" /><stop offset=".3" stopColor="#8a8f92" /><stop offset=".6" stopColor="#6a7074" /><stop offset="1" stopColor="#7c8286" /></linearGradient>
    <ellipse cx="32" cy="12" rx="30" ry="6" fill="#3c4144" />
    <path d="M6 14L10 6L16 8L20 1L27 5L33 3L38 8L43 2L49 6L56 8L60 14L50 22H14z" fill="#e6e7e8" />
    <path d="M12 12L20 7L24 14z" fill="#3a3e44" /><path d="M24 10L34 7L32 14z" fill="#3fc8d4" /><path d="M32 15L41 9L46 17z" fill="#7a4a34" /><path d="M45 8L53 13L46 14z" fill="#44506a" /><path d="M16 15L28 14L24 20z" fill="#b8bcc0" />
    <path d="M2 12Q10 22 32 21T62 12L55 74Q52 82 32 82T9 74z" fill="url(#bin)" />
    <path d="M2 12Q10 22 32 21T62 12" fill="none" stroke="#a4a8ac" strokeWidth="1.200" />
    <path d="M11 75Q32 68 53 75Q48 81 32 81T11 75z" fill="#7f8589" />
  </svg>
);

type App = { name: string; Art: () => React.ReactElement; running?: boolean; count?: number };

const apps: App[] = [
  { name: 'Finder', Art: Finder, running: true },
  { name: 'Launchpad', Art: Launchpad },
  { name: 'Safari', Art: Safari },
  { name: 'Messages', Art: Messages },
  { name: 'Mail', Art: Mail },
  { name: 'Maps', Art: Maps },
  { name: 'Photos', Art: Photos },
  { name: 'FaceTime', Art: FaceTime },
  { name: 'Calendar', Art: Calendar },
  { name: 'Contacts', Art: Contacts },
  { name: 'Reminders', Art: Reminders, count: 4 },
  { name: 'Notes', Art: Notes },
  { name: 'TV', Art: AppleTv },
  { name: 'Music', Art: Music },
  { name: 'Podcasts', Art: Podcasts },
  { name: 'Keynote', Art: Keynote },
  { name: 'Pages', Art: Pages },
  { name: 'App Store', Art: AppStore },
  { name: 'System Preferences', Art: Settings, count: 2 },
];
const extraApps: App[] = [
  { name: 'uTorrent', Art: MicroTorrent, running: true },
  { name: 'Brave', Art: Brave, running: true },
  { name: 'Google Chrome', Art: Chrome, running: true },
];
const places: App[] = [
  { name: 'Documents', Art: Folder },
  { name: 'Minimised window', Art: Minimised },
  { name: 'Trash', Art: Trash },
];

const DockGroup = ({ items }: { items: App[] }) => (
  <>
    {items.map(({ name, Art, running, count }) => (
      <DockItem key={name} aria-label={name}>
        <IconBox>
          <Art />
          {count && <Count>{count}</Count>}
        </IconBox>
        {running && <Running />}
      </DockItem>
    ))}
  </>
);

const Backdrop = () => (
  <Wallpaper viewBox="0 0 2560 1600" preserveAspectRatio="none" aria-hidden="true">
    <defs>
      <linearGradient id="sky" x1="0" y1="0" x2="0" y2="1"><stop offset="0" stopColor="#471879" /><stop offset="1" stopColor="#30106a" /></linearGradient>
      <linearGradient id="glow" x1="0" x2="1"><stop offset="0" stopColor="#3a0d60" /><stop offset="1" stopColor="#4c1274" /></linearGradient>
    </defs>
    <path d="M0 0H2560V1600H0z" fill="#15053f" />
    <path d="M0 0H1300V800H0z" fill="url(#sky)" />
    <path d="M45 48H400V250z" fill="#561d86" />
    <path d="M0 610L300 787V1100H0z" fill="#270b5c" />
    <path d="M0 934L300 1032V1500H0z" fill="#1a0746" />
    <path d="M0 1344L300 1416V1600H0z" fill="#0e0528" />
    <path d="M720 1588L1240 1588 1260 1600H730z" fill="#160647" />
    <path d="M1470 1460H1960L1900 1600H1690z" fill="url(#glow)" />
    <path d="M2200 0H2560V400z" fill="#2a1080" />
  </Wallpaper>
);

const menus = ['File', 'Edit', 'View', 'History', 'Bookmarks', 'Profiles', 'Tab', 'Window', 'Help'];

export default function App() {
  return (
    <>
      <GlobalStyle />
      <Desktop>
        <Backdrop />
        <MenuBar>
          <MenuList>
            <MenuItem aria-label="Apple menu"><FaApple /></MenuItem>
            <MenuItem $bold>Chrome</MenuItem>
            {menus.map((m) => <MenuItem key={m}>{m}</MenuItem>)}
          </MenuList>
          <StatusList>
            {statusIcons.map((s) => <StatusIcon key={s.name} $w={s.w} aria-label={s.name}>{s.icon}</StatusIcon>)}
            <Clock>{'Thu Feb 6  7:03 AM'}</Clock>
          </StatusList>
        </MenuBar>

        <BackWindow $ring="rgba(255,255,255,.17)" aria-label="Background window">
          <BackTitle>
            <BackTab />
            <Lights $top={29}>
              {[0, 1, 2].map((i) => <Light key={i} $color="#363638" aria-label="Window control" />)}
            </Lights>
            <BackTabSearch aria-label="Tab list"><Stroke d="M4 8L12 16L20 8" size={28} w={3} /></BackTabSearch>
          </BackTitle>
          <BackToolbar>
            <Row $gap={28}>
              <Stroke d="M15 3L7 12L15 21" size={32} w={2} />
              <Stroke d="M9 3L17 12L9 21" size={32} w={2} />
              <Stroke d="M21 12A9 9 0 1 1 18 5M18 1V6H13" size={34} w={2} />
            </Row>
            <Row $gap={16}>
              <VpnButton>VPN</VpnButton>
              <Stroke d="M1 4H23M1 12H23M1 20H23" size={32} w={2} />
            </Row>
          </BackToolbar>
        </BackWindow>

        <ChromeWindow $ring="rgba(255,225,205,.25)" aria-label="Google Chrome">
          <TabStrip>
            <StripLights $top={29}>
              <Light $color="#ff5f57" aria-label="Close" />
              <Light $color="#febc40" aria-label="Minimise" />
              <Light $color="#33c748" aria-label="Zoom" />
            </StripLights>
            <Tab>
              <ProlificMark />
              <TabTitle>Prolific</TabTitle>
              <Close />
            </Tab>
            <Tab $active>
              <XmMark />
              <TabTitle>Qualtrics Survey | Qualtrics Experience</TabTitle>
              <Close />
            </Tab>
            <NewTab aria-label="New tab"><Stroke d="M12 3.500V20.500M3.500 12H20.500" size={30} w={2.2} /></NewTab>
            <TabSearch aria-label="Search tabs"><Stroke d="M5.500 9L12 15.500L18.500 9" size={24} w={3.4} /></TabSearch>
          </TabStrip>

          <Toolbar>
            <ToolButton $dim aria-label="Back"><Stroke d="M22 12H3M12 3L3 12L12 21" size={26} w={2.6} /></ToolButton>
            <ToolButton $dim aria-label="Forward"><Stroke d="M2 12H21M12 3L21 12L12 21" size={26} w={2.6} /></ToolButton>
            <ToolButton aria-label="Reload"><Stroke d="M21 15.500A9.800 9.800 0 1 1 19.500 5.500M21 2V9H14z" size={27} w={2.6} /></ToolButton>
            <Omnibox>
              <SiteInfo aria-label="Site information">
                <svg width="26" height="26" viewBox="0 0 26 26" fill="none" stroke="currentColor" strokeWidth="2.800">
                  <circle cx="6" cy="6" r="3.600" /><path d="M13 6H25M1 20H13" /><circle cx="20" cy="20" r="3.600" />
                </svg>
              </SiteInfo>
              <Address aria-label="Address" readOnly value="nus.syd1.qualtrics.com/jfe/form/SV_bNjQIEALq0ZuTA2?PROLIFIC_PID=6778016ffeca5e6faafd..." />
              <Stroke d="M12 2.500L14.700 9.300L22 9.800L16.400 14.500L18.200 21.600L12 17.700L5.800 21.600L7.600 14.500L2 9.800L9.300 9.300z" size={34} w={1.9} />
            </Omnibox>
            <ToolButton aria-label="Price tracker">
              <svg width="32" height="14" viewBox="0 0 32 14" style={{ marginTop: -28 }}>
                <path d="M2 13Q6 4 14 1L20 0L28 6L30 13z" fill="#e8ded0" /><path d="M10 9L20 5L29 10V13H7z" fill="#ee8a1e" /><path d="M0 13L8 6L9 13z" fill="#2c1c12" /><path d="M17 2L24 1L26 6z" fill="#f0a040" />
              </svg>
              <PriceBadge><Clip>91.49</Clip></PriceBadge>
            </ToolButton>
            <ToolButton aria-label="Privacy Badger">
              <svg width="34" height="26" viewBox="0 0 34 26">
                <path d="M1 21L12 9L11 3L15 2L18 5L26 4L30 1L33 4L31 10L32 19L26 24H8z" fill="#f4f2ee" stroke="#e88a3c" strokeWidth="1.400" />
                <path d="M2 20L13 9L20 7L28 8L31 13L24 17L17 15L9 20zM12 4L14 4L15 7zM28 5L31 4L30 8z" fill="#151515" />
                <path d="M6 19L17 10L15 15L9 20z" fill="#f4f2ee" />
                <circle cx="20" cy="12" r="3" fill="#fff" /><circle cx="20" cy="12" r="1.600" fill="#111" /><path d="M1 19H5L6 22H2z" fill="#111" />
              </svg>
            </ToolButton>
            <ToolButton aria-label="Location">
              <svg width="24" height="32" viewBox="0 0 24 32"><path d="M12 1A11 11 0 0 1 23 12C23 18 16 25 12 31C8 25 1 18 1 12A11 11 0 0 1 12 1z" fill="#4b6ea6" /><circle cx="12" cy="12" r="6.200" fill="#c6eef6" /></svg>
            </ToolButton>
            <ToolButton aria-label="Extensions">
              <svg width="34" height="34" viewBox="1 0 34 34" style={{ margin: '-4px 0 0 2px' }}>
                <path d="M6 6.500H28.500V31.500H4V24Q9 22.500 9 18.500T4 13V8.500Q4 6.500 6 6.500z" fill="none" stroke="#e6c2ae" strokeWidth="3" strokeLinejoin="round" />
                <path d="M12.500 6A4 4 0 0 1 20.500 6zM29 14.500A4 4 0 0 1 29 22.500z" fill="#e6c2ae" />
              </svg>
            </ToolButton>
            <Divider />
            <ToolButton aria-label="Profile">
              <Avatar>
                <svg width="24" height="24" viewBox="0 0 24 24" fill="#fff"><circle cx="12" cy="6" r="6" /><path d="M0 24V21Q0 14 12 14T24 21V24z" /></svg>
              </Avatar>
            </ToolButton>
            <ToolButton aria-label="Menu">
              <svg width="8" height="30" viewBox="0 0 8 30" fill="currentColor"><circle cx="4" cy="4" r="3.200" /><circle cx="4" cy="15" r="3.200" /><circle cx="4" cy="26" r="3.200" /></svg>
            </ToolButton>
          </Toolbar>

          <Survey>
            <Question>
              <Banner>
                AI Revolution Leaves<br />
                Denver’s Medical Device<br />
                Industry Unchanged,<br />
                Keeping Recruitment Stable
              </Banner>
              <Passage>
                Imagine you are recruiting for a product development position for a major medical<br />
                device supplier in Denver, CO. <b>In contrast to others, your company has a lot<br />
                of stability despite the rise of AI.</b> This is especially the case for the role you<br />
                need to fill, a new member in a team that focuses on existing stable medical<br />
                technology. <b>The skills for this job are well-defined and have not changed,<br />
                making it clear what you need in a candidate.</b> You know precisely the type of<br />
                candidate you need, one that fits into the well-established mold of product<br />
                development. This makes your job as a recruiter particularly certain.
              </Passage>
            </Question>
            <NextButton>
              Next page
              <Stroke d="M8 3L16 12L8 21" size={24} w={2.6} />
            </NextButton>
            <Powered href="#qualtrics">
              Powered by Qualtrics
              <Stroke d="M10 4H2V22H20V14M15 2H22V9M22 2L10 14" size={26} w={1.8} />
            </Powered>
          </Survey>
        </ChromeWindow>

        <Dock>
          <DockGroup items={apps} />
          <DockSplit />
          <DockGroup items={extraApps} />
          <DockSplit />
          <DockGroup items={places} />
        </Dock>
      </Desktop>
    </>
  );
}
